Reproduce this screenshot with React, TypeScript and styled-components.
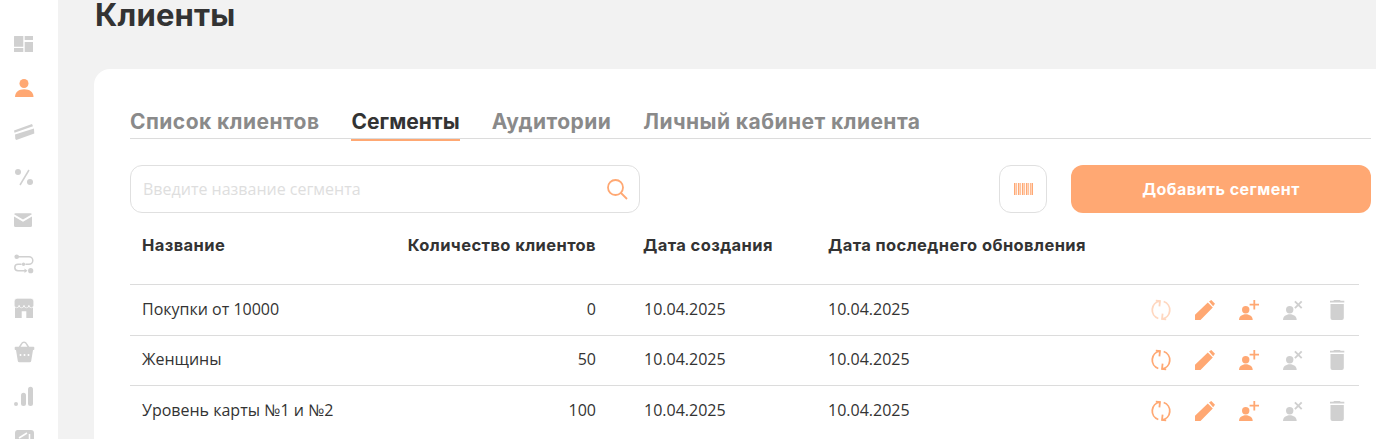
import React from "react";
import styled, { createGlobalStyle } from "styled-components";

const ORANGE = "#ffa873";
const GRAY = "#d0d0d0";
const DARK = "#333333";
const HEAD = `"Inter", "Noto Sans", sans-serif`;
const BODY = `"Open Sans", "Noto Sans", sans-serif`;

const Global = createGlobalStyle`
  html, body { margin: 0; padding: 0; height: 439px; overflow: hidden; background: #f2f2f2; }
  * { box-sizing: border-box; }
`;

const Page = styled.div`
  display: flex;
  width: 1376px;
  height: 439px;
  overflow: hidden;
  background: #f2f2f2;
`;
const Sidebar = styled.nav`
  flex: 0 0 58px;
  background: #fff;
  padding-top: 22px;
  display: flex;
  flex-direction: column;
  overflow: hidden;
`;
const NavItem = styled.div<{ $active?: boolean }>`
  flex: 0 0 44px;
  display: flex;
  align-items: center;
  justify-content: center;
  padding-right: 10px;
  color: ${(p) => (p.$active ? ORANGE : GRAY)};
`;
const Main = styled.main`
  flex: 1;
  min-width: 0;
  padding-left: 36px;
`;
const Title = styled.h1`
  margin: 0;
  height: 69px;
  padding-left: 1px;
  font: 700 31px/30px ${HEAD};
  letter-spacing: 0.2px;
  color: ${DARK};
`;
const Card = styled.section`
  background: #fff;
  border-radius: 16px 0 0 0;
  padding: 36px 5px 0 36px;
  height: 370px;
`;
const Tabs = styled.div`
  display: flex;
  gap: 32px;
  height: 34px;
  border-bottom: 1px solid #dcdcdc;
`;
const Tab = styled.div<{ $active?: boolean }>`
  height: 36px;
  padding-top: 5px;
  font: 700 21px/24px ${HEAD};
  letter-spacing: ${(p) => (p.$active ? "0" : "0.45px")};
  white-space: nowrap;
  color: ${(p) => (p.$active ? DARK : "#8a8a8a")};
  border-bottom: ${(p) => (p.$active ? `2px solid ${ORANGE}` : "none")};
`;
const Toolbar = styled.div`
  display: flex;
  align-items: center;
  margin-top: 26px;
  height: 48px;
`;
const Search = styled.div`
  width: 510px;
  height: 48px;
  border: 1px solid #e0e0e0;
  border-radius: 12px;
  display: flex;
  align-items: center;
  justify-content: space-between;
  padding: 0 10px 0 12px;
  font: 400 16px/20px ${BODY};
  color: ${ORANGE};
`;
const Placeholder = styled.span`
  color: #dedede;
`;
const IconBtn = styled.div`
  margin-left: auto;
  width: 48px;
  height: 48px;
  border: 1px solid #e0e0e0;
  border-radius: 12px;
  display: flex;
  align-items: center;
  justify-content: center;
`;
const AddBtn = styled.div`
  margin-left: 24px;
  width: 300px;
  height: 48px;
  border-radius: 12px;
  background: ${ORANGE};
  color: #fff;
  display: flex;
  align-items: center;
  justify-content: center;
  font: 700 16px/20px ${HEAD};
  letter-spacing: 0.45px;
`;
const Table = styled.div`
  width: 1229px;
`;
const Row = styled.div<{ $head?: boolean }>`
  display: grid;
  grid-template-columns: 220px 234px 232px 1fr 220px;
  align-items: center;
  padding-left: 12px;
  height: ${(p) => (p.$head ? "72px" : "50.5px")};
  border-bottom: 1px solid #dcdcdc;
  padding-bottom: ${(p) => (p.$head ? "8px" : "0")};
  font: ${(p) => (p.$head ? `700 16.5px/20px ${HEAD}` : `400 16px/20px ${BODY}`)};
  letter-spacing: ${(p) => (p.$head ? "0.4px" : "0")};
  color: ${DARK};
  &:last-child {
    border-bottom: none;
  }
`;
const Cell = styled.div<{ $body?: boolean }>`
  padding-bottom: ${(p) => (p.$body ? "2px" : "0")};
`;
const Num = styled(Cell)`
  text-align: right;
`;
const DateCell = styled(Cell)<{ $body?: boolean }>`
  padding-left: ${(p) => (p.$body ? "48px" : "47px")};
`;
const Actions = styled.div`
  display: flex;
`;
const Act = styled.div<{ $c: string; $o?: number }>`
  width: 44px;
  display: flex;
  justify-content: center;
  color: ${(p) => p.$c};
  opacity: ${(p) => p.$o ?? 1};
`;

const Ico: React.FC<{ children: React.ReactNode }> = ({ children }) => (
  <svg width="24" height="24" viewBox="0 0 24 24" fill="currentColor">
    {children}
  </svg>
);

const nav = [
  <path d="M2.500 4h8.800v10.700H2.500a.5.5 0 0 1-.5-.5V4.500a.5.5 0 0 1 .5-.5zM12.700 4h8.300v4h-8.300zM12.700 10H21v10h-8.300zM2 16h9.300v4H2z" />,
  <>
    <circle cx="12" cy="7.500" r="4.500" />
    <path d="M3 21c0-5 4-7.700 9.200-7.700s9.300 2.700 9.300 7.700z" />
  </>,
  <>
    <path d="M2 10.500 20 4l1 2.300-18.500 6.400z" />
    <path d="M3 14.500 22 8.500l.3 5-18 6.500-1-1z" />
  </>,
  <>
    <circle cx="6" cy="8" r="3" />
    <circle cx="18" cy="18" r="3" />
    <path d="M17 6 8 21" fill="none" stroke="currentColor" strokeWidth="1.500" />
  </>,
  <>
    <path d="M3.500 5.300h15a1.500 1.500 0 0 1 1.400 1L11 11.500 2.100 6.300a1.500 1.500 0 0 1 1.400-1z" />
    <path d="M2 8.500l9 5.300 9-5.300V17.500a1.500 1.500 0 0 1-1.500 1.500h-15A1.500 1.500 0 0 1 2 17.500z" />
  </>,
  <>
    <circle cx="4.700" cy="4.700" r="2.300" />
    <circle cx="18.700" cy="18.700" r="2.600" />
    <circle cx="11.500" cy="12.300" r="1.700" />
    <path d="M6 4.700h11a3.800 3.800 0 0 1 0 7.600h-3.500M9.500 12.300H6a3.200 3.200 0 0 0 0 6.400h8" fill="none" stroke="currentColor" strokeWidth="1.500" />
    <path d="M12.500 16.500l3 2.200-3 2.200z" />
  </>,
  <>
    <path d="M3 11h18v11h-6.700v-6.700H9.700V22H3z" />
    <path
      d="M5 2.300h14a3 3 0 0 1 2.800 2.700v4.300a2.450 2.450 0 0 1-4.900 0 2.450 2.450 0 0 1-4.900 0 2.450 2.450 0 0 1-4.900 0 2.450 2.450 0 0 1-4.900 0V5A3 3 0 0 1 5 2.300z"
      stroke="#fff"
      strokeWidth="0.7"
    />
  </>,
  <>
    <path d="M7 8 9.500 3.800a2.800 2.800 0 0 1 5 0L17 8" fill="none" stroke="currentColor" strokeWidth="1.500" />
    <path d="M3.500 6.700h18a.8.8 0 0 1 .8.800v1.700a.8.8 0 0 1-.8.800h-18a.8.8 0 0 1-.8-.8V7.500a.8.8 0 0 1 .8-.8z" />
    <path d="M4 10h17l-1.800 11a1.500 1.500 0 0 1-1.500 1.300H7.300A1.500 1.500 0 0 1 5.800 21z" />
    <circle cx="8.500" cy="15" r="1" fill="#fff" />
    <circle cx="12.500" cy="15" r="1" fill="#fff" />
    <circle cx="16.500" cy="15" r="1" fill="#fff" />
  </>,
  <>
    <circle cx="4" cy="20" r="2" />
    <rect x="9" y="8.700" width="5" height="13.300" rx="2.500" />
    <rect x="16" y="2.700" width="5" height="19.300" rx="2.500" />
  </>,
  <>
    <path d="M5 2h14a3 3 0 0 1 3 3v17H3V5a3 3 0 0 1 2-3z" />
    <path d="M7 10 15 5M17.500 6v6" fill="none" stroke="#fff" strokeWidth="1.500" />
  </>,
];

const Refresh = () => (
  <Ico>
    <g fill="none" stroke="currentColor" strokeWidth="1.800">
      <path d="M9.300 20.500A9 9 0 0 1 10.900 3.100" />
      <path d="M6.800 2.600l4.200.5-.6 5.200" />
      <path d="M14.700 3.500A9 9 0 0 1 13.100 20.900" />
      <path d="M17.200 21.400l-4.200-.5.600-5.200" />
    </g>
  </Ico>
);
const Pencil = () => (
  <Ico>
    <path d="M2 22v-5.300L14.800 4.500l5 5L7.500 22zM16 3.500 18.300 2 22 5.700l-1.900 2.600z" />
  </Ico>
);
const PersonBase = () => (
  <>
    <circle cx="8.700" cy="11.700" r="3.700" />
    <path d="M2 22c0-3.500 3-5.700 6.800-5.700s6.900 2.200 6.900 5.700z" />
  </>
);
const PersonPlus = () => (
  <Ico>
    <PersonBase />
    <path d="M16.400 2h1.800v3.800H22v1.800h-3.800v3.800h-1.800V7.600h-3.800V5.800h3.800z" />
  </Ico>
);
const PersonX = () => (
  <Ico>
    <PersonBase />
    <path d="M13.900 3.300l6.800 6.800M20.700 3.300l-6.800 6.800" fill="none" stroke="currentColor" strokeWidth="1.900" />
  </Ico>
);
const Trash = () => (
  <Ico>
    <path d="M9 2h6l.6.8h3.700v1.700H5V2.800h3.400zM5.500 6h13.300v14a2 2 0 0 1-2 2H7.500a2 2 0 0 1-2-2z" />
  </Ico>
);

const rows = [
  { name: "Покупки от 10000", n: "0", faded: true },
  { name: "Женщины", n: "50" },
  { name: "Уровень карты №1 и №2", n: "100" },
];

export default function App() {
  return (
    <Page>
      <Global />
      <Sidebar>
        {nav.map((n, i) => (
          <NavItem key={i} $active={i === 1}>
            <Ico>{n}</Ico>
          </NavItem>
        ))}
      </Sidebar>
      <Main>
        <Title>Клиенты</Title>
        <Card>
          <Tabs>
            <Tab>Список клиентов</Tab>
            <Tab $active>Сегменты</Tab>
            <Tab>Аудитории</Tab>
            <Tab>Личный кабинет клиента</Tab>
          </Tabs>
          <Toolbar>
            <Search>
              <Placeholder>Введите название сегмента</Placeholder>
              <svg width="24" height="24" viewBox="0 0 24 24" fill="none" stroke="currentColor" strokeWidth="1.800">
                <circle cx="10.500" cy="10.500" r="7.500" />
                <path d="M16 16l6 6" />
              </svg>
            </Search>
            <IconBtn>
              <svg width="19" height="12" viewBox="0 0 19 12" fill={ORANGE}>
                <path d="M0 0h1.500v12H0zM2.300 0h.8v12h-.8zM4 0h1.500v12H4zM6.300 0h.8v12h-.8zM8 0h1.500v12H8zM10.300 0h.8v12h-.8zM12 0h1.500v12H12zM14.300 0h.8v12h-.8zM16 0h.8v12H16zM17.500 0H19v12h-1.500z" />
              </svg>
            </IconBtn>
            <AddBtn>Добавить сегмент</AddBtn>
          </Toolbar>
          <Table>
            <Row $head>
              <Cell>Название</Cell>
              <Num>Количество клиентов</Num>
              <DateCell>Дата создания</DateCell>
              <Cell>Дата последнего обновления</Cell>
              <div />
            </Row>
            {rows.map((r) => (
              <Row key={r.name}>
                <Cell $body>{r.name}</Cell>
                <Num $body>{r.n}</Num>
                <DateCell $body>10.04.2025</DateCell>
                <Cell $body>10.04.2025</Cell>
                <Actions>
                  <Act $c={ORANGE} $o={r.faded ? 0.45 : 1}><Refresh /></Act>
                  <Act $c={ORANGE}><Pencil /></Act>
                  <Act $c={ORANGE}><PersonPlus /></Act>
                  <Act $c={GRAY}><PersonX /></Act>
                  <Act $c={GRAY}><Trash /></Act>
                </Actions>
              </Row>
            ))}
          </Table>
        </Card>
      </Main>
    </Page>
  );
}
